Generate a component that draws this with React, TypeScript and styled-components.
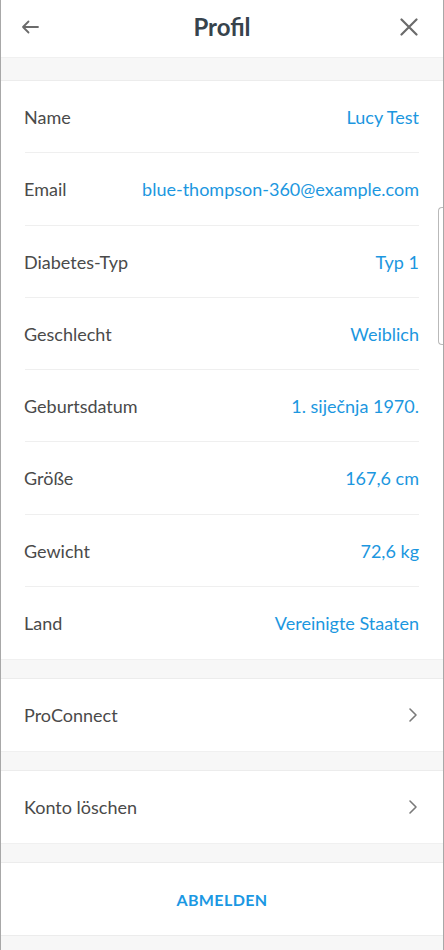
import React from "react";
import styled, { createGlobalStyle } from "styled-components";

const Global = createGlobalStyle`
  html, body { margin: 0; padding: 0; background: #ffffff; }
  body { font-family: Lato, "Open Sans", sans-serif; }
`;

const Modal = styled.div`
  position: relative;
  width: 444px;
  height: 950px;
  box-sizing: border-box;
  border-left: 1px solid #a8a8a8;
  border-right: 1px solid #a8a8a8;
  background: #ffffff;
  overflow: hidden;
  display: flex;
  flex-direction: column;
`;

const Header = styled.header`
  height: 57px;
  flex: none;
  display: grid;
  grid-template-columns: 56px 1fr 56px;
  align-items: center;
  background: #ffffff;
`;

const IconButton = styled.button<{ $align: "start" | "end" }>`
  border: 0;
  background: transparent;
  padding: 0;
  height: 57px;
  display: flex;
  align-items: center;
  justify-content: ${(p) => (p.$align === "start" ? "flex-start" : "flex-end")};
  padding-left: ${(p) => (p.$align === "start" ? "19px" : "0")};
  padding-right: ${(p) => (p.$align === "end" ? "25px" : "0")};
  padding-bottom: 3px;
  color: #6b6b6b;
`;

const Title = styled.h1`
  margin: 0;
  text-align: center;
  font-family: Lato, sans-serif;
  font-weight: 700;
  font-size: 24px;
  color: #37434c;
  line-height: 1;
  padding-bottom: 3px;
`;

const Band = styled.div<{ $h: number }>`
  flex: none;
  height: ${(p) => p.$h}px;
  box-sizing: border-box;
  background: #f7f7f7;
  border-bottom: 1px solid #ececec;
  border-top: 1px solid #f0f0f0;
`;

const Section = styled.section`
  display: flex;
  flex-direction: column;
  flex: none;
`;

const Row = styled.div<{ $last?: boolean }>`
  position: relative;
  height: 72.25px;
  box-sizing: border-box;
  display: flex;
  align-items: center;
  justify-content: space-between;
  padding: 0 24px 0 23px;
  &::after {
    content: "";
    display: ${(p) => (p.$last ? "none" : "block")};
    position: absolute;
    left: 24px;
    right: 24px;
    bottom: 0;
    height: 1px;
    background: #efefef;
  }
`;

const Label = styled.span`
  font-family: Lato, sans-serif;
  font-size: 18px;
  color: #4a4a4a;
`;

const Value = styled.span`
  font-family: Lato, sans-serif;
  font-size: 18px;
  color: #1c97e0;
`;

const NavRow = styled.div`
  height: 72px;
  box-sizing: border-box;
  display: flex;
  align-items: center;
  justify-content: space-between;
  padding: 0 24px 0 23px;
  flex: none;
`;

const LogoutRow = styled.div`
  height: 72px;
  flex: none;
  display: flex;
  align-items: center;
  justify-content: center;
  font-family: Lato, sans-serif;
  font-weight: 700;
  font-size: 16px;
  letter-spacing: 0.4px;
  color: #1b98e3;
`;

const Tail = styled.div`
  flex: 1;
  background: #f7f7f7;
  border-top: 1px solid #ececec;
`;

const ScrollThumb = styled.div`
  position: absolute;
  right: -1px;
  top: 207px;
  width: 6px;
  height: 138px;
  box-sizing: border-box;
  border: 1px solid #b9b9b9;
  border-right: 0;
  border-radius: 4px 0 0 4px;
  background: #ffffff;
`;

const Chevron = () => (
  <svg width="12" height="16" viewBox="0 0 12 16" fill="none">
    <path d="M3 2 L9 8 L3 14" stroke="#7a7a7a" strokeWidth="1.6" strokeLinecap="round" strokeLinejoin="round" />
  </svg>
);

const rows: [string, string][] = [
  ["Name", "Lucy Test"],
  ["Email", "blue-thompson-360@example.com"],
  ["Diabetes-Typ", "Typ 1"],
  ["Geschlecht", "Weiblich"],
  ["Geburtsdatum", "1. siječnja 1970."],
  ["Größe", "167,6 cm"],
  ["Gewicht", "72,6 kg"],
  ["Land", "Vereinigte Staaten"],
];

export default function App() {
  return (
    <>
      <Global />
      <Modal>
        <Header>
          <IconButton $align="start" aria-label="Zurück">
            <svg width="20" height="16" viewBox="0 0 20 16" fill="none">
              <path d="M18 8 H3 M8.5 2.5 L3 8 L8.5 13.5" stroke="#6b6b6b" strokeWidth="1.8" strokeLinecap="round" strokeLinejoin="round" />
            </svg>
          </IconButton>
          <Title>Profil</Title>
          <IconButton $align="end" aria-label="Schließen">
            <svg width="18" height="18" viewBox="0 0 18 18" fill="none">
              <path d="M1.5 1.5 L16.5 16.5 M16.5 1.5 L1.5 16.5" stroke="#6b6b6b" strokeWidth="2.2" strokeLinecap="round" />
            </svg>
          </IconButton>
        </Header>
        <Band $h={24} />
        <Section>
          {rows.map(([l, v], i) => (
            <Row key={l} $last={i === rows.length - 1}>
              <Label>{l}</Label>
              <Value>{v}</Value>
            </Row>
          ))}
        </Section>
        <Band $h={20} />
        <NavRow>
          <Label>ProConnect</Label>
          <Chevron />
        </NavRow>
        <Band $h={20} />
        <NavRow>
          <Label>Konto löschen</Label>
          <Chevron />
        </NavRow>
        <Band $h={20} />
        <LogoutRow>ABMELDEN</LogoutRow>
        <Tail />
        <ScrollThumb />
      </Modal>
    </>
  );
}
